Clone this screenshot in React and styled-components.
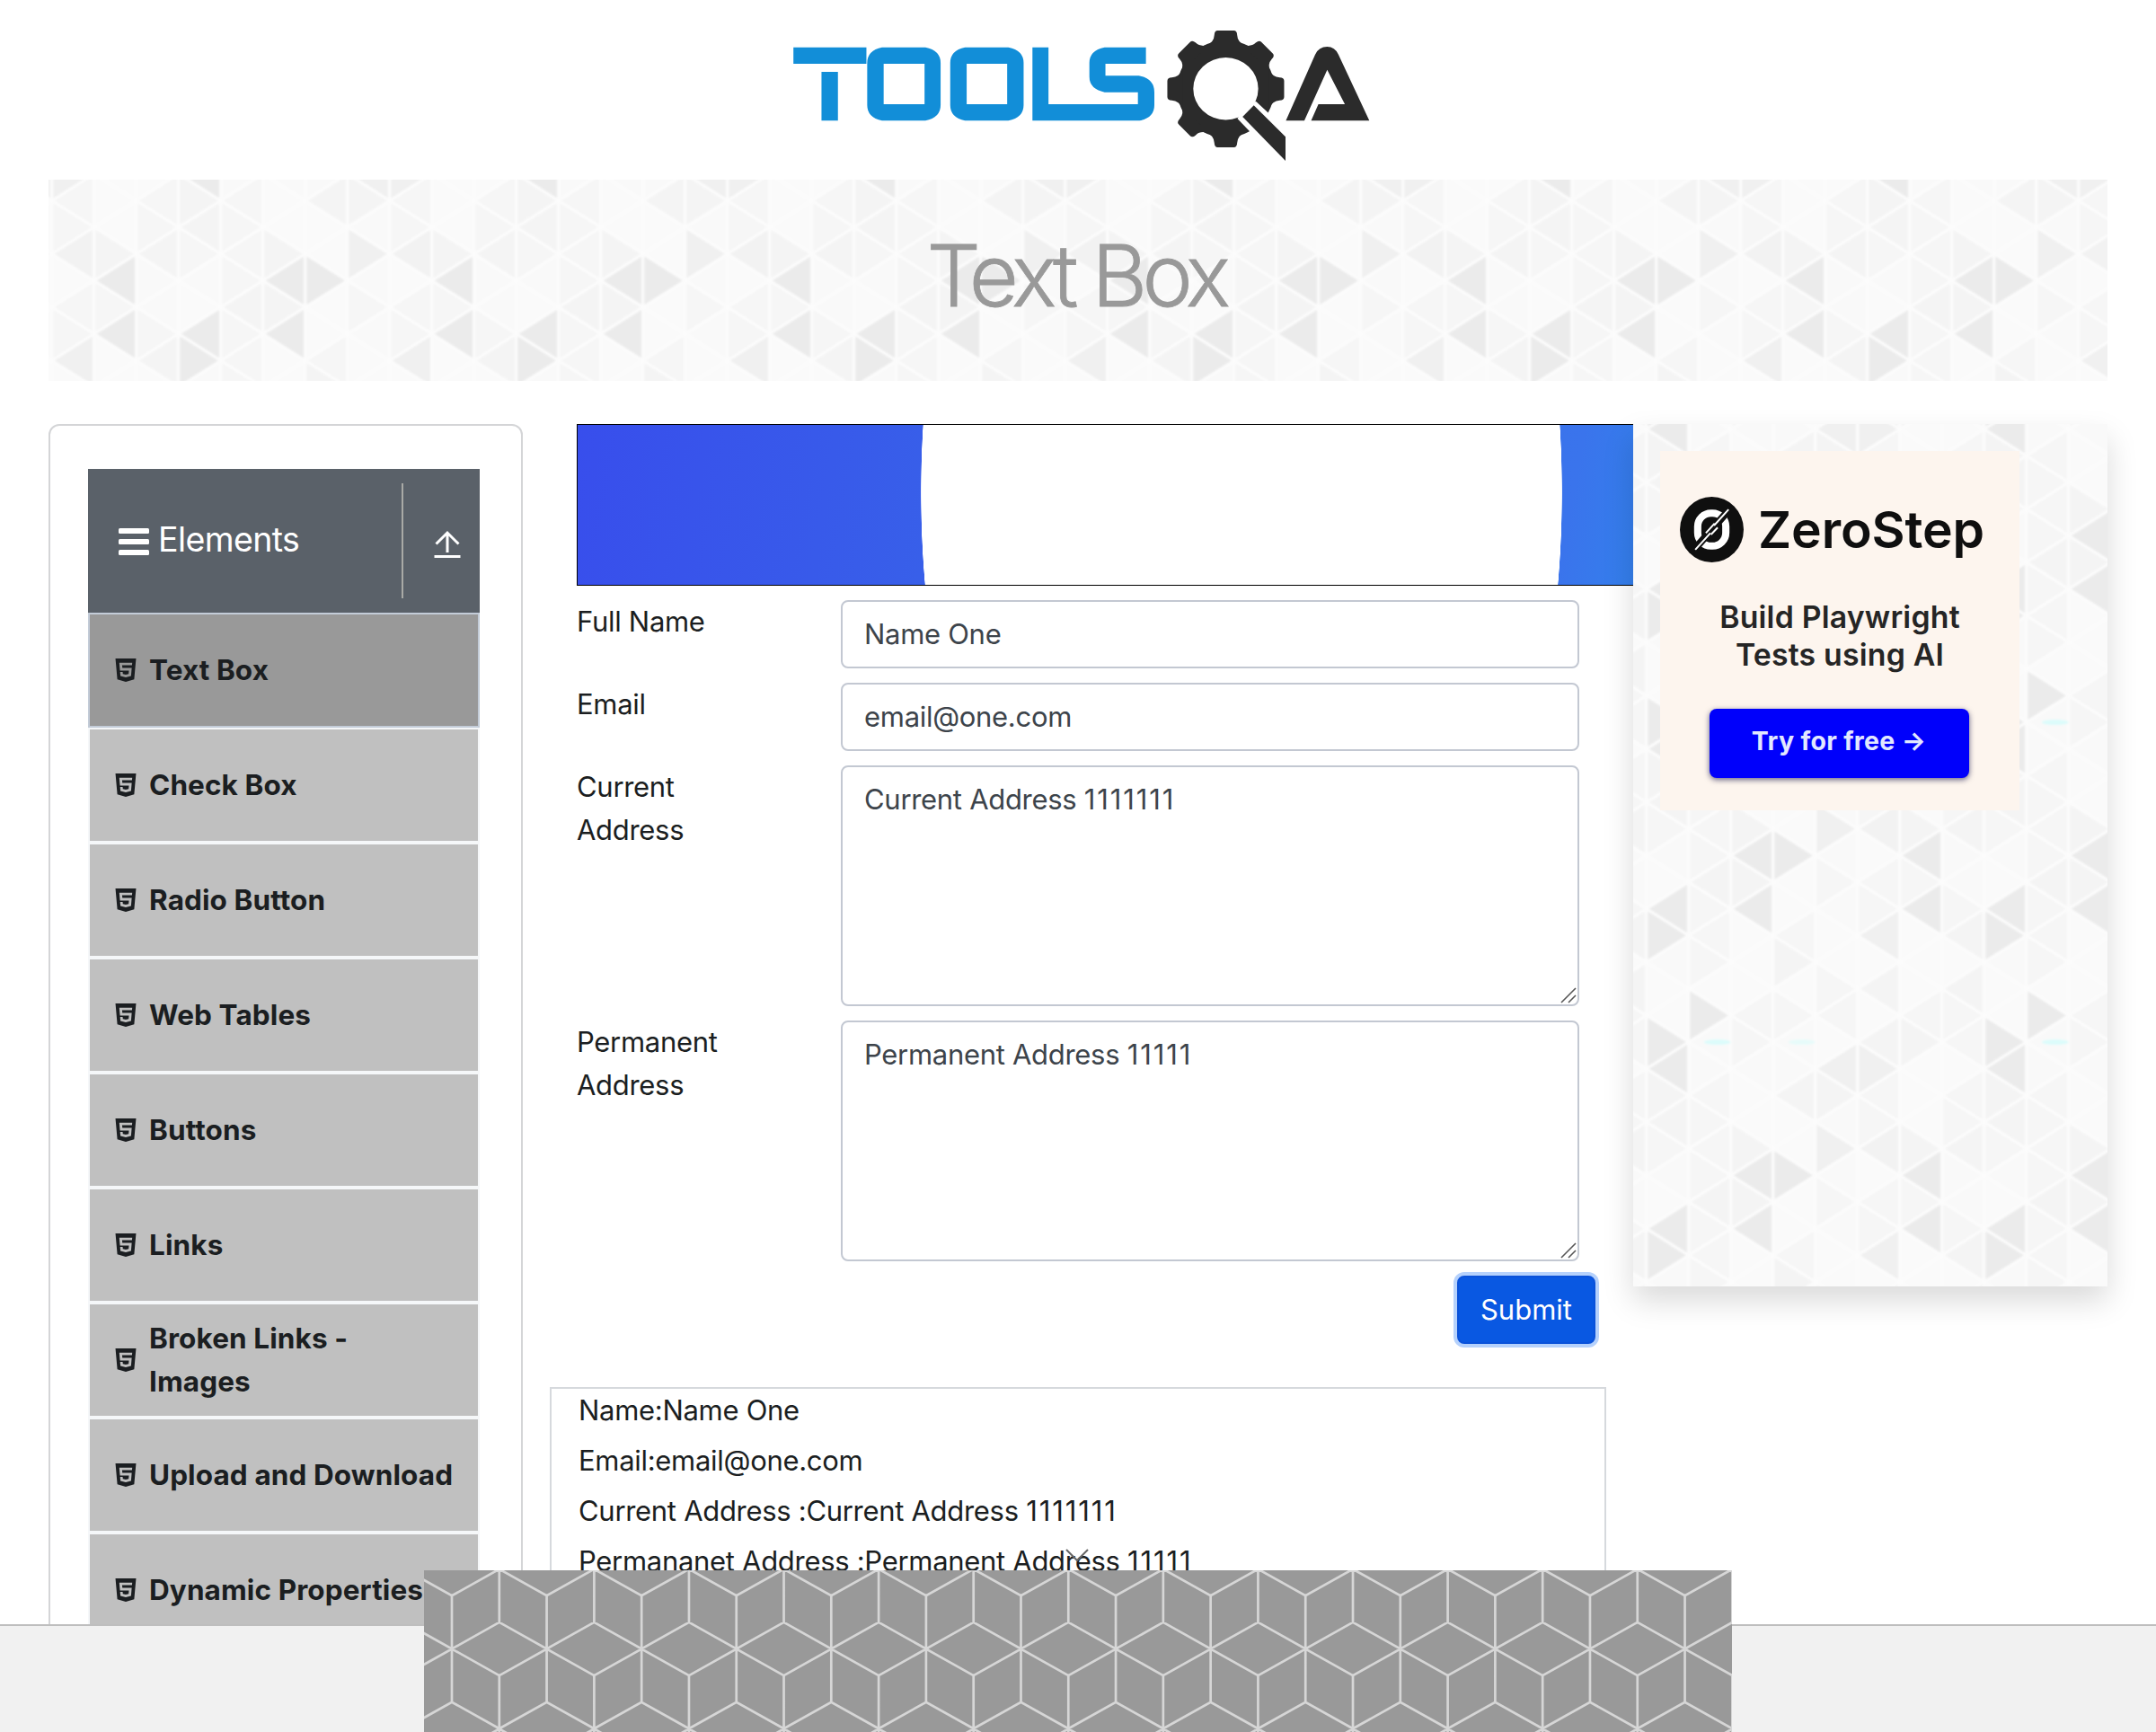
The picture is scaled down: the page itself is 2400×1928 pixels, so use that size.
import React from "react";
import styled, { createGlobalStyle } from "styled-components";
import { AiFillHtml5 } from "react-icons/ai";

const svgUrl = (svg) => `url("data:image/svg+xml,${encodeURIComponent(svg)}")`;

/* ---- triangle mosaic: 8 columns x 12 rows, one shade digit per triangle ---- */
const SHADES = ["#fafafa", "#f9f9f9", "#f6f6f6", "#f4f4f4", "#f2f2f2", "#f0f0f0", "#ebebeb"];
const MOSAIC = [
  "106610066332",
  "232220611222",
  "636000221003",
  "600230211300",
  "121002205315",
  "022503035224",
  "626000230003",
  "112303220223",
];

function mosaicTile() {
  const W = 376;
  const H = 356;
  const cw = W / 8;
  const rh = H / 12;
  const ox = 314.8;
  const oy = 178.4;
  let shapes = "";
  for (let k = -8; k < 9; k++) {
    for (let j = -8; j < 9; j++) {
      const col = ((k % 8) + 8) % 8;
      const row = ((j % 12) + 12) % 12;
      const x0 = ox + k * cw;
      const y = oy + j * rh;
      const left = (col + row) % 2 === 0;
      const apex = left ? x0 : x0 + cw;
      const base = left ? x0 + cw : x0;
      shapes += `<path d="M${apex} ${y}L${base} ${y - rh}V${y + rh}Z" fill="${SHADES[+MOSAIC[col][row]]}"/>`;
    }
  }
  const glow = (k, o) =>
    `<ellipse cx="${(ox + k * cw + 32) % W}" cy="${(oy + 7 * rh) % H}" rx="15" ry="3" fill="#d5fdfb" opacity="${o}"/>`;
  return svgUrl(
    `<svg xmlns="http://www.w3.org/2000/svg" width="${W}" height="${H}" viewBox="0 0 ${W} ${H}"><filter id="s" x="-20%" y="-20%" width="140%" height="140%"><feGaussianBlur stdDeviation="0.8"/></filter><g filter="url(#s)"><g stroke="#fcfcfc" stroke-width="3" stroke-linejoin="round">${shapes}</g>${glow(1, 0.8)}${glow(3, 0.5)}</g></svg>`
  );
}

/* ---- isometric cube line pattern, drawn across the full banner ---- */
function cubeBanner() {
  const w = 105.58;
  const h = 177.8;
  const s = 29.6;
  let d = "";
  for (let m = -1; m < 15; m++) {
    for (let n = -1; n < 2; n++) {
      const A = 31 + m * w;
      const P = A - w / 2;
      const B = A + w / 2;
      const y = -1.3 + n * h;
      d += `M${P} ${y}L${A} ${y + s}L${B} ${y}`;
      d += `M${A} ${y + s}V${y + 5 * s}`;
      d += `M${B} ${y - 2 * s}V${y + 2 * s}`;
      d += `M${P} ${y + 2 * s}L${A} ${y + 3 * s}L${B} ${y + 2 * s}`;
      d += `M${P} ${y + 4 * s}L${A} ${y + 3 * s}L${B} ${y + 4 * s}`;
      d += `M${P} ${y + 6 * s}L${A} ${y + 5 * s}L${B} ${y + 6 * s}`;
    }
  }
  return svgUrl(
    `<svg xmlns="http://www.w3.org/2000/svg" width="1456" height="180" viewBox="0 0 1456 180"><path d="${d}" fill="none" stroke="#d6d6d6" stroke-width="2.7"/></svg>`
  );
}

const MOSAIC_BG = mosaicTile();
const CUBE_BG = cubeBanner();

const GlobalStyle = createGlobalStyle`
  *, *::before, *::after { box-sizing: border-box; }
  body {
    margin: 0;
    background: #fff;
    color: #1b1e21;
    font: 400 31px/48px Inter, "Liberation Sans", sans-serif;
    letter-spacing: -0.3px;
  }
`;

const Page = styled.div`
  position: relative;
  width: 2400px;
  height: 1928px;
  overflow: hidden;
  background: #fff;
`;

const Header = styled.header`
  display: flex;
  justify-content: center;
  height: 200px;
  padding-top: 10px;
`;

const TitleBand = styled.div`
  display: flex;
  align-items: center;
  justify-content: center;
  height: 224px;
  margin: 0 54px 48px;
  background: #fafafa ${MOSAIC_BG} center / 376px 356px;
`;

const Title = styled.h1`
  margin: 0;
  padding-bottom: 10px;
  font-size: 95px;
  line-height: 116px;
  font-weight: 300;
  letter-spacing: -5.8px;
  text-indent: -4px;
  color: #999;
  -webkit-text-stroke: 0.8px #999;
`;

const Columns = styled.div`
  display: flex;
  align-items: flex-start;
  padding: 0 54px;
`;

const Sidebar = styled.nav`
  width: 528px;
  flex: none;
  height: 1500px;
  padding: 48px 46px 0 42px;
  border: 2px solid #d4d5d7;
  border-radius: 12px;
`;

const GroupHeader = styled.div`
  display: flex;
  align-items: center;
  height: 160px;
  background: #5a6169;
  color: #fff;
`;

const GroupLabel = styled.div`
  display: flex;
  align-items: center;
  flex: 1;
  padding-left: 34px;
  gap: 10px;
  font-size: 37.5px;
  letter-spacing: -0.6px;
  padding-bottom: 2px;
`;

const Bars = styled.svg`
  margin-top: 4px;
`;

const GroupToggle = styled.div`
  display: flex;
  align-items: center;
  width: 87px;
  height: 128px;
  padding-left: 34px;
  padding-top: 8px;
  border-left: 2px solid #a9aaa6;
`;

const Item = styled.div`
  display: flex;
  align-items: center;
  gap: 10px;
  height: 128px;
  padding: 0 24px;
  border: 2px solid ${(p) => (p.$active ? "#c3ccd8" : "#f5f7f9")};
  background: ${(p) => (p.$active ? "#999" : "#c0c0c0")};
  color: #1b1e21;
  font-size: 31.5px;
  font-weight: 700;
  letter-spacing: 0.1px;

  svg { flex: none; }
  span { max-width: ${(p) => (p.$narrow ? "300px" : "none")}; white-space: ${(p) => (p.$narrow ? "normal" : "nowrap")}; }
`;

const Main = styled.main`
  display: flex;
  flex-direction: column;
  width: 1236px;
  flex: none;
`;

const BlueAd = styled.div`
  height: 180px;
  margin-left: 60px;
  border: 1px solid #000;
  border-right: 0;
  background:
    radial-gradient(357px 654px at 739px 75px, #fff 99.85%, transparent 100%),
    linear-gradient(100deg, #384eec 0%, #3860e9 36%, #3a74ec 93%, #347fec 100%);
`;

const Form = styled.form`
  display: flex;
  flex-direction: column;
  gap: 16px;
  padding: 16px 60px 0;
`;

const Field = styled.div`
  display: flex;
  align-items: flex-start;
`;

const Label = styled.label`
  width: 294px;
  flex: none;
  padding-right: 100px;
`;

const Box = styled.div`
  position: relative;
  flex: 1;
  height: ${(p) => (p.$tall ? 268 : 76)}px;
  padding: 12px 24px;
  border: 2px solid #c3c8d2;
  border-radius: 8px;
  color: #3d444b;
`;

const Digits = styled.span`
  letter-spacing: 1.9px;
`;

const Grip = styled.svg`
  position: absolute;
  right: 1px;
  bottom: 1px;
`;

const SubmitRow = styled.div`
  display: flex;
  justify-content: flex-end;
  margin-right: -18px;
`;

const Submit = styled.button`
  width: 154px;
  height: 76px;
  padding: 0;
  border: 2px solid #0a52da;
  border-radius: 8px;
  background: #0958e2;
  box-shadow: 0 0 0 4px #b5d1fc;
  color: #fff;
  font: inherit;
`;

const Output = styled.div`
  height: 260px;
  margin: 48px 30px 0;
  padding: 0 30px;
  border: 2px solid #d6d9dd;

  p { margin: 0 0 8px; }
`;

const Aside = styled.aside`
  position: relative;
  width: 528px;
  height: 960px;
  flex: none;
  padding: 30px;
  background: #fafafa ${MOSAIC_BG} center / 376px 356px;
  box-shadow: 0 16px 32px rgba(0, 0, 0, 0.15);
`;

const ZeroCard = styled.div`
  display: flex;
  flex-direction: column;
  align-items: center;
  width: 400px;
  height: 400px;
  padding-top: 51px;
  background: #fdf5ee;
`;

const Brand = styled.div`
  display: flex;
  align-items: center;
  align-self: flex-start;
  gap: 16px;
  padding-left: 22px;
  height: 73px;
  font-size: 57px;
  font-weight: 600;
  letter-spacing: -0.1px;
  color: #0f0f0f;
`;

const Pitch = styled.div`
  margin-top: 40px;
  font-size: 33.8px;
  line-height: 41.7px;
  font-weight: 600;
  letter-spacing: 0.2px;
  text-align: center;
  color: #252525;
`;

const TryButton = styled.div`
  display: flex;
  align-items: center;
  justify-content: center;
  width: 289px;
  height: 77px;
  margin: 40px 2px 0 0;
  border-radius: 8px;
  background: #0000fb;
  box-shadow: 0 2px 6px rgba(0, 0, 60, 0.6);
  color: #e2e8ff;
  font-size: 28.5px;
  font-weight: 700;
  letter-spacing: 0.3px;
  padding-bottom: 5px;
`;

const Footer = styled.footer`
  position: absolute;
  left: 0;
  right: 0;
  bottom: 0;
  height: 120px;
  border-top: 2px solid #bebebe;
  background: #f1f1f1;
`;

const StickyAd = styled.div`
  position: absolute;
  left: 472px;
  bottom: 0;
  width: 1456px;
  height: 180px;
  background: #999 ${CUBE_BG} 0 0 no-repeat;
`;

const AdClose = styled.svg`
  position: absolute;
  left: 713px;
  top: -26px;
`;

const TOOTH = "M-22-48Q-13-52-12.7-60Q-12.5-65-9-65H9Q12.5-65 12.7-60Q13-52 22-48Z";

function Logo() {
  return (
    <svg width="680" height="190" viewBox="0 0 1523.2 570" preserveAspectRatio="none">
      <g fill="#128ed8" fillRule="evenodd">
        <path d="M52 128H234V183H52ZM122 210H163V373H122Z" />
        <path d="M273 128H381Q419 138 419 180V321Q419 363 381 373H273Q236 363 236 321V180Q236 138 273 128ZM277 183V318H379V183Z" />
        <path d="M480 128H588Q626 138 626 180V321Q626 363 588 373H480Q443 363 443 321V180Q443 138 480 128ZM484 183V318H585V183Z" />
        <path d="M648 128H688V318H911V278H828Q790 268 790 226V180Q790 138 828 128H931V183H830V223H913Q952 233 952 278V321Q952 363 915 373H648Z" />
      </g>
      <g fill="#2b2b2b">
        <g transform="translate(1130 267) scale(2.24 3)">
          <path fillRule="evenodd" d="M0-54A54 54 0 1 0 0 54A54 54 0 1 0 0-54ZM0-35A36 34.6 0 1 1 0 34.5A36 34.6 0 1 1 0-35Z" />
          {[0, 45, 90, 180, 225, 270, 315].map((a) => (
            <path key={a} d={TOOTH} transform={`rotate(${a})`} />
          ))}
        </g>
        <path fill="#fff" d="M1205 308L1237 348L1300 430V560L1187 405L1159 366L1180 330Z" />
        <path d="M1200 322L1172 360L1279 507V427Z" />
        <path d="M1280 373L1353 152Q1362 126 1383 126Q1402 126 1411 152L1488 373H1343L1361 318H1427L1383 203L1326 373Z" />
      </g>
    </svg>
  );
}

function ZeroMark() {
  return (
    <svg width="71" height="73" viewBox="91 38 211 217">
      <ellipse cx="196.500" cy="146.500" rx="105.500" ry="108.500" fill="#0f0f0f" />
      <rect x="150" y="92" width="93" height="109" rx="44" fill="none" stroke="#fff" strokeWidth="24" />
      <path d="M132 220L262 72" stroke="#0f0f0f" strokeWidth="24" />
      <path d="M252 80L204 133M142 213L192 158M177 158L206 126M194 163L216 140" stroke="#fff" strokeWidth="6" />
    </svg>
  );
}

function ResizeGrip() {
  return (
    <Grip width="18" height="18" viewBox="0 0 18 18">
      <path d="M1 17L17 1M9 17L17 9" stroke="#555" strokeWidth="1.6" fill="none" />
    </Grip>
  );
}

/* Runs of digits get a looser tracking than the letters around them. */
function Text({ children }) {
  return children
    .split(/(\d+)/)
    .filter(Boolean)
    .map((part, i) => (/^\d/.test(part) ? <Digits key={i}>{part}</Digits> : part));
}

const MENU = [
  "Text Box",
  "Check Box",
  "Radio Button",
  "Web Tables",
  "Buttons",
  "Links",
  "Broken Links - Images",
  "Upload and Download",
  "Dynamic Properties",
];

const FIELDS = [
  { label: "Full Name", value: "Name One" },
  { label: "Email", value: "email@one.com" },
  { label: "Current Address", value: "Current Address 1111111", tall: true },
  { label: "Permanent Address", value: "Permanent Address 11111", tall: true },
];

const RESULTS = [
  "Name:Name One",
  "Email:email@one.com",
  "Current Address :Current Address 1111111",
  "Permananet Address :Permanent Address 11111",
];

export default function App() {
  return (
    <Page>
      <GlobalStyle />
      <Header>
        <Logo />
      </Header>
      <TitleBand>
        <Title>Text Box</Title>
      </TitleBand>
      <Columns>
        <Sidebar>
          <GroupHeader>
            <GroupLabel>
              <Bars width="34" height="30" viewBox="0 0 34 30" fill="#fff">
                <rect width="34" height="6" rx="1.500" />
                <rect y="12" width="34" height="6" rx="1.500" />
                <rect y="24" width="34" height="6" rx="1.500" />
              </Bars>
              Elements
            </GroupLabel>
            <GroupToggle>
              <svg width="30" height="32" viewBox="0 0 30 32" fill="none" stroke="#fff" strokeWidth="3">
                <path d="M2.500 15.500L15 3L27.500 15.500M15 3V25M0.500 29.500H29.500" />
              </svg>
            </GroupToggle>
          </GroupHeader>
          {MENU.map((name, i) => (
            <Item key={name} $active={i === 0} $narrow={name.startsWith("Broken")}>
              <AiFillHtml5 size={32} />
              <span>{name}</span>
            </Item>
          ))}
        </Sidebar>
        <Main>
          <BlueAd />
          <Form>
            {FIELDS.map((f) => (
              <Field key={f.label}>
                <Label>{f.label}</Label>
                <Box $tall={f.tall}>
                  <Text>{f.value}</Text>
                  {f.tall && <ResizeGrip />}
                </Box>
              </Field>
            ))}
            <SubmitRow>
              <Submit type="button">Submit</Submit>
            </SubmitRow>
          </Form>
          <Output>
            {RESULTS.map((line) => (
              <p key={line}>
                <Text>{line}</Text>
              </p>
            ))}
          </Output>
        </Main>
        <Aside>
          <ZeroCard>
            <Brand>
              <ZeroMark />
              ZeroStep
            </Brand>
            <Pitch>
              Build Playwright
              <br />
              Tests using AI
            </Pitch>
            <TryButton>Try for free →</TryButton>
          </ZeroCard>
        </Aside>
      </Columns>
      <Footer />
      <StickyAd>
        <AdClose width="28" height="18" viewBox="0 0 28 18">
          <path d="M2 3L14 15L26 3" fill="none" stroke="#666" strokeWidth="2" />
        </AdClose>
      </StickyAd>
    </Page>
  );
}
